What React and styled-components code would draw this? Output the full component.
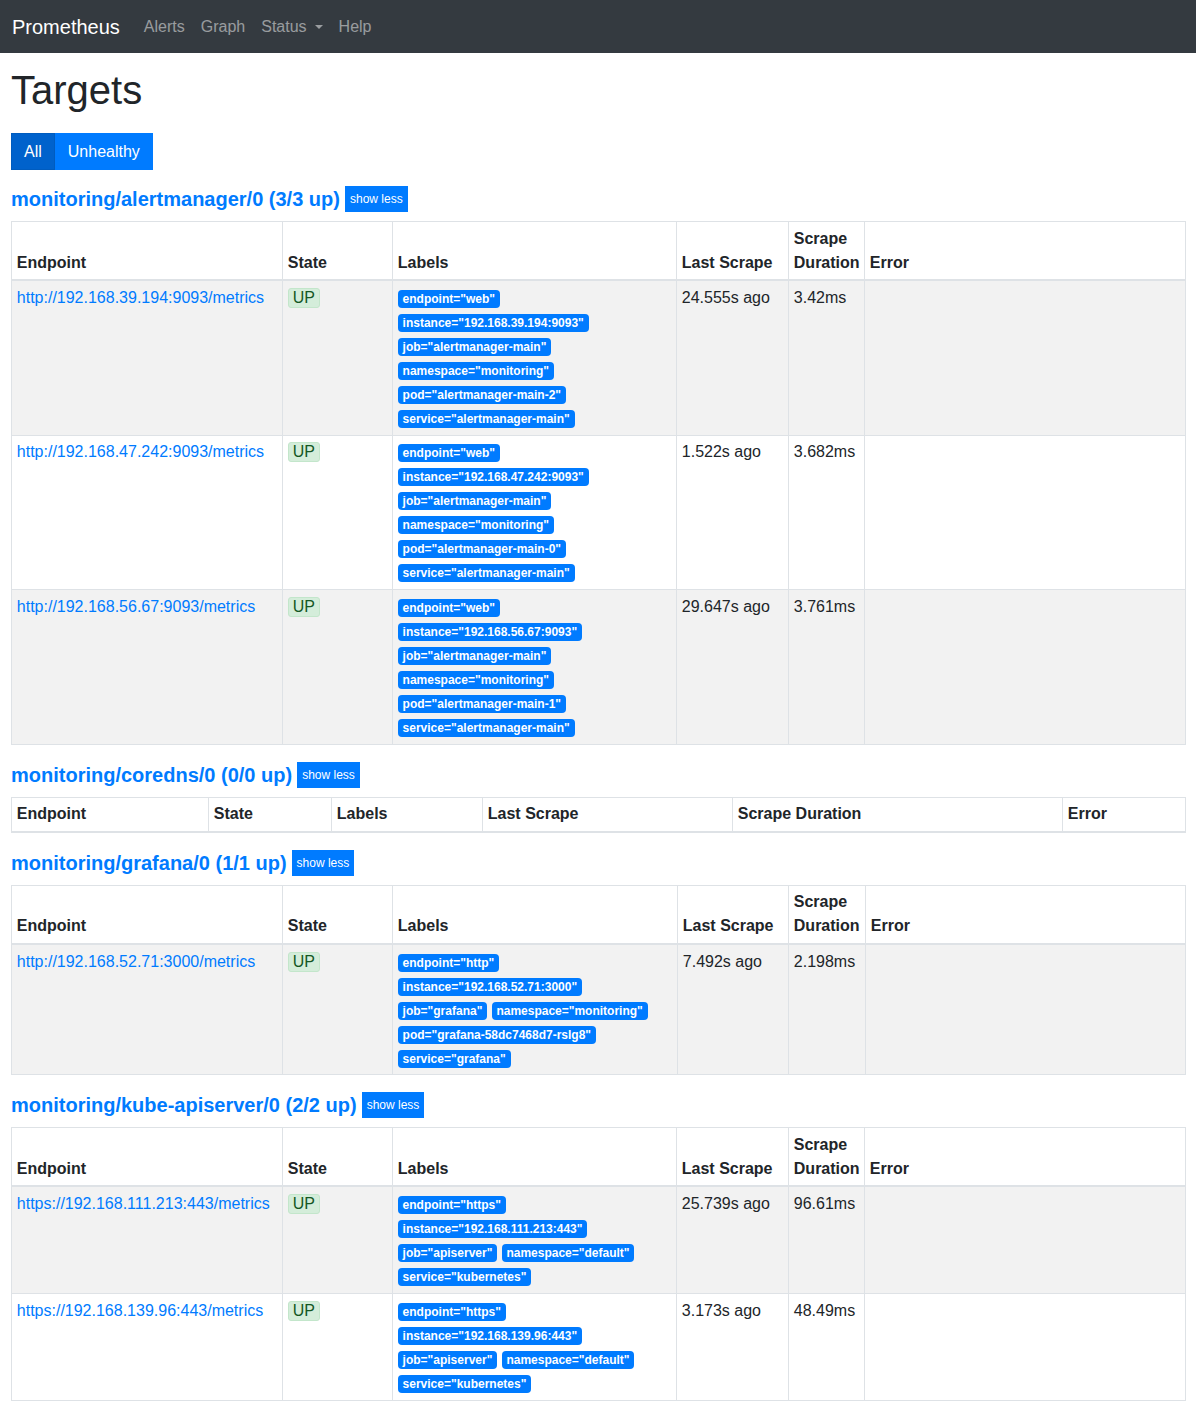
import React from "react";
import styled, { createGlobalStyle } from "styled-components";

const GlobalStyle = createGlobalStyle`
  body {
    margin: 0;
    font-family: "Liberation Sans", Arial, sans-serif;
    font-size: 16px;
    line-height: 1.5;
    color: #212529;
    background: #fff;
  }
  * { box-sizing: border-box; }
`;

const Navbar = styled.nav`
  display: flex;
  align-items: center;
  height: 53px;
  padding: 0 12px;
  background: #343a40;
`;

const Brand = styled.a`
  font-size: 20px;
  color: #fff;
  margin-right: 16px;
  text-decoration: none;
`;

const NavLink = styled.a`
  color: rgba(255, 255, 255, 0.5);
  padding: 0 8px;
  text-decoration: none;
  &::after {
    content: ${(p) => (p.$caret ? "''" : "none")};
    display: inline-block;
    margin-left: 8px;
    vertical-align: 3px;
    border-top: 4.8px solid;
    border-right: 4.8px solid transparent;
    border-left: 4.8px solid transparent;
  }
`;

const Container = styled.div`
  padding: 0 11px;
`;

const Title = styled.h1`
  font-size: 40px;
  font-weight: 500;
  line-height: 1.2;
  margin: 13px 0 19px;
`;

const ButtonGroup = styled.div`
  display: inline-flex;
  margin-bottom: 16px;
`;

const FilterButton = styled.button`
  font-family: inherit;
  font-size: 16px;
  line-height: 1.5;
  padding: 6px 12px 5px;
  color: #fff;
  background: ${(p) => (p.$active ? "#0062cc" : "#007bff")};
  border: 1px solid ${(p) => (p.$active ? "#005cbf" : "#007bff")};
  cursor: pointer;
`;

const PoolHeader = styled.div`
  display: flex;
  align-items: center;
  gap: 5px;
  height: 26px;
  margin-bottom: 9px;
`;

const PoolTitle = styled.a`
  font-size: 20px;
  font-weight: bold;
  color: #007bff;
  text-decoration: none;
  line-height: 1.2;
`;

const SmallButton = styled.button`
  font-family: inherit;
  font-size: 12px;
  line-height: 1.5;
  padding: 3px 4px;
  color: #fff;
  background: #007bff;
  border: 1px solid #007bff;
`;

const Table = styled.table`
  width: 100%;
  table-layout: fixed;
  border-collapse: collapse;
  margin-bottom: 17px;
`;

const Th = styled.th`
  text-align: left;
  vertical-align: bottom;
  padding: 4.5px 4.8px;
  border: 1px solid #dee2e6;
  border-bottom: 2px solid #dee2e6;
  font-weight: bold;
`;

const Row = styled.tr`
  &:nth-of-type(odd) {
    background: rgba(0, 0, 0, 0.05);
  }
`;

const Td = styled.td`
  vertical-align: top;
  padding: 4.8px;
  border: 1px solid #dee2e6;
  word-wrap: break-word;
`;

const EndpointLink = styled.a`
  color: #007bff;
  text-decoration: none;
`;

const StateBadge = styled.span`
  display: inline-block;
  padding: 0 4px;
  line-height: 18px;
  color: #155724;
  background: #d4edda;
  border: 1px solid #c3e6cb;
  border-radius: 3px;
`;

const Label = styled.span`
  display: inline-block;
  font-size: 12px;
  font-weight: 700;
  line-height: 1;
  padding: 3px 4.8px;
  color: #fff;
  background: #007bff;
  border-radius: 4px;
  white-space: nowrap;
`;

const wide = [271, 110, 284, 112, 76, 321];

const pools = [
  {
    name: "monitoring/alertmanager/0",
    up: "3/3",
    cols: wide,
    targets: [
      {
        url: "http://192.168.39.194:9093/metrics",
        labels: ['endpoint="web"', 'instance="192.168.39.194:9093"', 'job="alertmanager-main"', 'namespace="monitoring"', 'pod="alertmanager-main-2"', 'service="alertmanager-main"'],
        last: "24.555s ago",
        dur: "3.42ms",
      },
      {
        url: "http://192.168.47.242:9093/metrics",
        labels: ['endpoint="web"', 'instance="192.168.47.242:9093"', 'job="alertmanager-main"', 'namespace="monitoring"', 'pod="alertmanager-main-0"', 'service="alertmanager-main"'],
        last: "1.522s ago",
        dur: "3.682ms",
      },
      {
        url: "http://192.168.56.67:9093/metrics",
        labels: ['endpoint="web"', 'instance="192.168.56.67:9093"', 'job="alertmanager-main"', 'namespace="monitoring"', 'pod="alertmanager-main-1"', 'service="alertmanager-main"'],
        last: "29.647s ago",
        dur: "3.761ms",
      },
    ],
  },
  {
    name: "monitoring/coredns/0",
    up: "0/0",
    cols: [197, 123, 151, 250, 330, 123],
    targets: [],
  },
  {
    name: "monitoring/grafana/0",
    up: "1/1",
    cols: [271, 110, 285, 111, 77, 320],
    targets: [
      {
        url: "http://192.168.52.71:3000/metrics",
        labels: ['endpoint="http"', 'instance="192.168.52.71:3000"', 'job="grafana"', 'namespace="monitoring"', 'pod="grafana-58dc7468d7-rslg8"', 'service="grafana"'],
        last: "7.492s ago",
        dur: "2.198ms",
      },
    ],
  },
  {
    name: "monitoring/kube-apiserver/0",
    up: "2/2",
    cols: wide,
    targets: [
      {
        url: "https://192.168.111.213:443/metrics",
        labels: ['endpoint="https"', 'instance="192.168.111.213:443"', 'job="apiserver"', 'namespace="default"', 'service="kubernetes"'],
        last: "25.739s ago",
        dur: "96.61ms",
      },
      {
        url: "https://192.168.139.96:443/metrics",
        labels: ['endpoint="https"', 'instance="192.168.139.96:443"', 'job="apiserver"', 'namespace="default"', 'service="kubernetes"'],
        last: "3.173s ago",
        dur: "48.49ms",
      },
    ],
  },
];

const Pool = ({ pool }) => (
  <div>
    <PoolHeader>
      <PoolTitle href="#">
        {pool.name} ({pool.up} up)
      </PoolTitle>
      <SmallButton>show less</SmallButton>
    </PoolHeader>
    <Table>
      <colgroup>
        {pool.cols.map((w, i) => (
          <col key={i} style={{ width: w }} />
        ))}
      </colgroup>
      <thead>
        <tr>
          <Th>Endpoint</Th>
          <Th>State</Th>
          <Th>Labels</Th>
          <Th>Last Scrape</Th>
          <Th>Scrape Duration</Th>
          <Th>Error</Th>
        </tr>
      </thead>
      <tbody>
        {pool.targets.map((t) => (
          <Row key={t.url}>
            <Td>
              <EndpointLink href="#">{t.url}</EndpointLink>
            </Td>
            <Td>
              <StateBadge>UP</StateBadge>
            </Td>
            <Td>
              {t.labels.map((l) => (
                <React.Fragment key={l}>
                  <Label>{l}</Label>{" "}
                </React.Fragment>
              ))}
            </Td>
            <Td>{t.last}</Td>
            <Td>{t.dur}</Td>
            <Td></Td>
          </Row>
        ))}
      </tbody>
    </Table>
  </div>
);

export default function App() {
  return (
    <>
      <GlobalStyle />
      <Navbar>
        <Brand href="#">Prometheus</Brand>
        <NavLink href="#">Alerts</NavLink>
        <NavLink href="#">Graph</NavLink>
        <NavLink href="#" $caret>
          Status
        </NavLink>
        <NavLink href="#">Help</NavLink>
      </Navbar>
      <Container>
        <Title>Targets</Title>
        <ButtonGroup>
          <FilterButton $active>All</FilterButton>
          <FilterButton>Unhealthy</FilterButton>
        </ButtonGroup>
        {pools.map((p) => (
          <Pool key={p.name} pool={p} />
        ))}
      </Container>
    </>
  );
}
